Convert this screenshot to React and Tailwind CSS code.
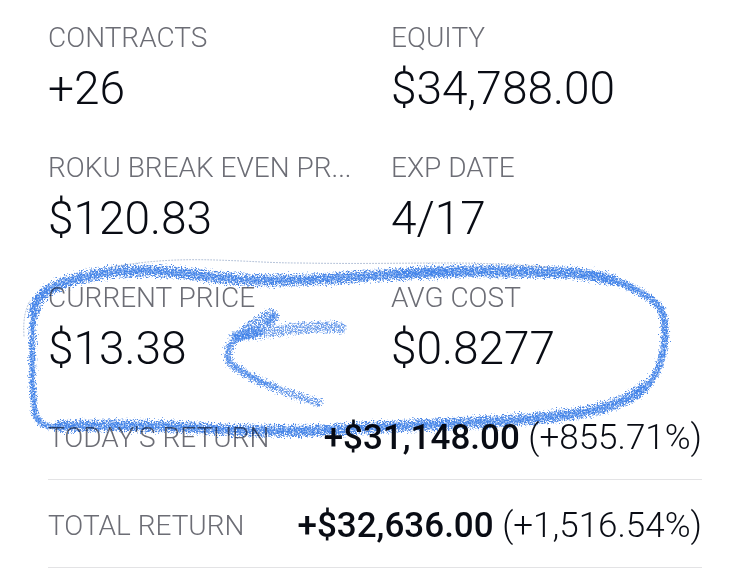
import React from "react";

const stats = [
  { label: "CONTRACTS", value: "+26" },
  { label: "EQUITY", value: "$34,788.00" },
  { label: "ROKU BREAK EVEN PR...", value: "$120.83" },
  { label: "EXP DATE", value: "4/17" },
  { label: "CURRENT PRICE", value: "$13.38" },
  { label: "AVG COST", value: "$0.8277" },
];

const returns = [
  { label: "TODAY'S RETURN", amount: "+$31,148.00", percent: "(+855.71%)" },
  { label: "TOTAL RETURN", amount: "+$32,636.00", percent: "(+1,516.54%)" },
];

const TOP = "M34 313 C35 295 50 287 75 279 C105 271 130 270 155 271 C185 272 210 278 250 280 C300 282 340 278 370 276 C400 274 420 272 450 272";
const TOP_RIGHT = "M400 274 C440 271 500 271 540 272 C575 272 595 275 612 280";
const RIGHT = "M590 274 C620 280 645 293 656 303 C665 312 665 322 665 334 C664 358 658 380 637 394";
const BOTTOM = "M643 388 C615 412 565 416 520 420 C460 424 400 425 350 429 C310 432 250 431 200 428 C160 425 110 425 60 426";
const LEFT = "M70 427 C48 428 38 426 35 413 C31 390 32 350 33 318 C33 300 37 298 48 290";
const SHAFT = "M341 328 C320 325 290 329 268 332 C255 333 243 335 235 337";
const HEAD = "M243 334 C230 341 228 348 228 357 C228 366 245 373 262 382 C280 391 300 397 319 403";

// Blue crayon circle and arrow drawn over the price and cost
const Marker = () => (
  <svg
    viewBox="0 0 750 574"
    className="pointer-events-none absolute top-0 left-0 w-full mix-blend-multiply"
    fill="none"
    strokeLinecap="round"
    strokeLinejoin="round"
    aria-hidden="true"
  >
    <defs>
      <filter id="dust" filterUnits="userSpaceOnUse" x="0" y="240" width="750" height="220" colorInterpolationFilters="sRGB">
        <feTurbulence type="fractalNoise" baseFrequency="0.7" numOctaves="2" seed="4" result="noise" />
        <feDisplacementMap in="SourceGraphic" in2="noise" scale="10" xChannelSelector="R" yChannelSelector="G" result="rough" />
        <feColorMatrix in="noise" type="matrix" values="0 0 0 0 0  0 0 0 0 0  0 0 0 0 0  0 0 4 0 -1.4" result="grain" />
        <feComposite in="rough" in2="grain" operator="in" />
      </filter>
      <filter id="wax" filterUnits="userSpaceOnUse" x="0" y="240" width="750" height="220" colorInterpolationFilters="sRGB">
        <feTurbulence type="fractalNoise" baseFrequency="0.5" numOctaves="2" seed="9" result="noise" />
        <feDisplacementMap in="SourceGraphic" in2="noise" scale="8" xChannelSelector="R" yChannelSelector="G" result="rough" />
        <feColorMatrix in="noise" type="matrix" values="0 0 0 0 0  0 0 0 0 0  0 0 0 0 0  0 0 3 0 -0.8" result="grain" />
        <feComposite in="rough" in2="grain" operator="in" />
      </filter>
    </defs>

    <g filter="url(#dust)" stroke="#4a86e6">
      <path d={TOP} strokeWidth="12" />
      <path d={TOP_RIGHT} strokeWidth="12" />
      <path d={RIGHT} strokeWidth="7" />
      <path d={BOTTOM} strokeWidth="12" />
      <path d={LEFT} strokeWidth="6" />
      <path d={SHAFT} strokeWidth="11" strokeOpacity="0.8" />
      <path d={HEAD} strokeWidth="8" strokeOpacity="0.85" />
      <path d="M271 317 L262 323 L248 331" strokeWidth="16" strokeOpacity="0.9" />
    </g>

    <g filter="url(#wax)" stroke="#4083ea" strokeOpacity="0.75">
      <path d={TOP} strokeWidth="6" />
      <path d={TOP_RIGHT} strokeWidth="8" />
      <path d={RIGHT} strokeWidth="6" />
      <path d={BOTTOM} strokeWidth="6" />
      <path d={LEFT} strokeWidth="5" />
      <path d="M262 332 C250 332 230 340 228 350 C225 362 235 368 248 375 L276 388" strokeWidth="4" />
      <path d="M258 331 L238 336" strokeWidth="10" />
      <path d="M273 317 L268 322" strokeWidth="6" />
    </g>

    <g stroke="#8a9fc2" strokeWidth="0.7" strokeDasharray="1 2">
      <path d="M24 336 C23 320 25 310 30 301" />
      <path d="M112 267 C150 260 185 259 215 260 C250 261 270 263 300 263 C360 264 400 263 450 263 C490 263 520 265 550 267" />
    </g>
  </svg>
);

const App = () => {
  return (
    <main className="relative bg-white px-12 pt-[22px] font-['Roboto',sans-serif] font-light text-[#090c14]">
      <dl className="grid grid-cols-2 gap-x-8 gap-y-9">
        {stats.map((stat) => (
          <div key={stat.label}>
            <dt className="text-[28px] leading-8 whitespace-nowrap text-[#6c6d75]">{stat.label}</dt>
            <dd className="mt-1.5 text-[46px] leading-14 whitespace-nowrap">{stat.value}</dd>
          </div>
        ))}
      </dl>

      <dl className="mt-4">
        {returns.map((item) => (
          <div key={item.label} className="flex h-22 items-center justify-between border-b border-[#e3e3e5] pt-1">
            <dt className="text-[28px] leading-8 whitespace-nowrap text-[#6c6d75]">{item.label}</dt>
            <dd className="text-[35px] leading-10 whitespace-nowrap">
              <span className="font-medium">{item.amount}</span> {item.percent}
            </dd>
          </div>
        ))}
      </dl>

      <Marker />
    </main>
  );
};

export default App;
